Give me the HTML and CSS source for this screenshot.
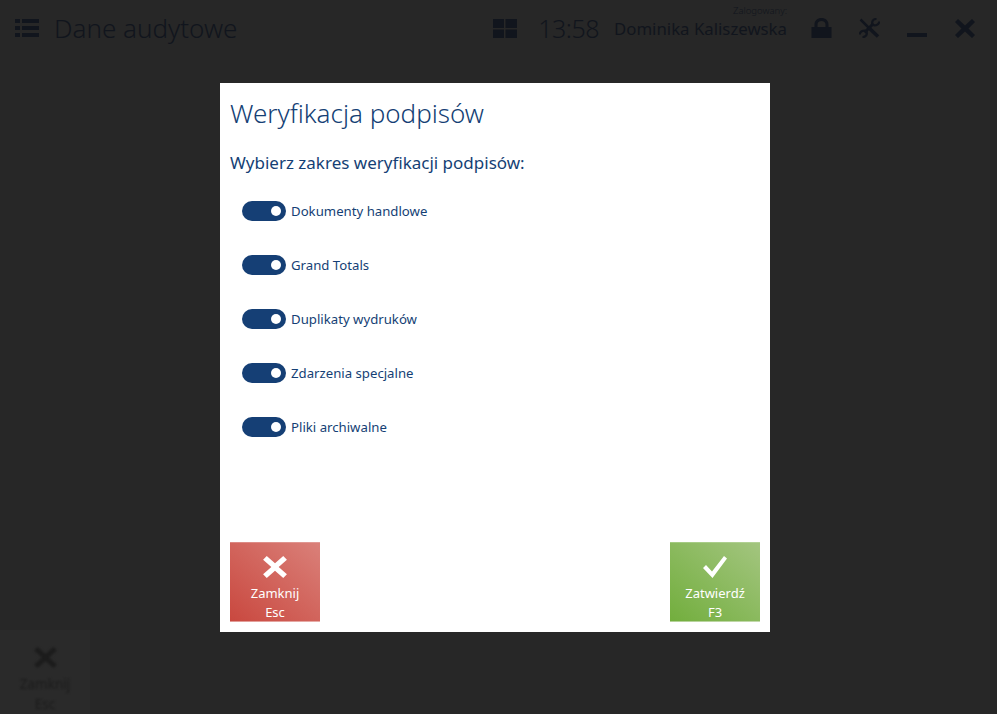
FILE: index.html
```html
<!DOCTYPE html>
<html lang="pl">
<head>
  <meta charset="UTF-8" />
  <title>Dane audytowe</title>
  <link rel="stylesheet" href="styles.css">
</head>
<body>
  <div class="page">
    <header class="topbar">
      <svg class="icon menu-icon" width="24" height="18" viewBox="0 0 24 18">
        <path d="M0 0h5v4H0zM7 0h17v4H7zM0 7h5v4H0zM7 7h17v4H7zM0 14h5v4H0zM7 14h17v4H7z"/>
      </svg>
      <div class="page-title">Dane audytowe</div>
      <svg class="icon tiles-icon" width="24" height="19" viewBox="0 0 24 19">
        <path d="M0 0h11v9H0zM12.500 0H24v9H12.500zM0 10.500h11V19H0zM12.500 10.500H24V19H12.500z"/>
      </svg>
      <div class="clock">13:58</div>
      <div class="user">
        <span class="user-label">Zalogowany:</span>
        <span class="user-name">Dominika Kaliszewska</span>
      </div>
      <svg class="icon lock-icon" width="21" height="20" viewBox="0 0 20 20">
        <path d="M0 9h3V6.500C3 2.500 6 0 10 0s7 2.500 7 6.500V9h3v11H0zM6 9h8V6.500C14 4.300 12.300 3 10 3S6 4.300 6 6.500z"/>
      </svg>
      <svg class="tools-icon" width="21" height="20" viewBox="0 0 21 20">
        <path d="M5.500 14.500l9-9" stroke-width="3"/>
        <path d="M17.500 1C14 .8 12.500 3.500 13.500 6.500 16 8.500 20 7 20.300 3.500" stroke-width="2.200"/>
        <path d="M3.500 19C7 19.200 8.500 16.500 7.500 13.500 5 11.500 1 13 .7 16.500" stroke-width="2.200"/>
        <path d="M1.500 1.500l8 8" stroke-width="2.500"/>
        <path d="M9.500 9.500l9.500 9" stroke-width="3.500"/>
      </svg>
      <svg class="icon min-icon" width="20" height="4" viewBox="0 0 20 4">
        <path d="M0 0h20v4H0z"/>
      </svg>
      <svg class="icon close-icon" width="20" height="19" viewBox="0 0 20 19">
        <path d="M0 3l3-3 7 6.500L17 0l3 3-6.500 6.500L20 16l-3 3-7-6.500L3 19l-3-3 6.500-6.500z"/>
      </svg>
    </header>

    <div class="tile-bar">
      <div class="tile-dim">
        <svg width="25" height="21" viewBox="0 0 26 24">
          <path d="M0 4l4-4 9 8 9-8 4 4-9 8 9 8-4 4-9-8-9 8-4-4 9-8z"/>
        </svg>
        <span>Zamknij</span>
        <span>Esc</span>
      </div>
    </div>
  </div>

  <div class="overlay">
    <div class="dialog">
      <h1 class="dialog-title">Weryfikacja podpisów</h1>
      <p class="dialog-lead">Wybierz zakres weryfikacji podpisów:</p>

      <ul class="toggles">
        <li class="toggle-row"><span class="toggle"></span>Dokumenty handlowe</li>
        <li class="toggle-row"><span class="toggle"></span>Grand Totals</li>
        <li class="toggle-row"><span class="toggle"></span>Duplikaty wydruków</li>
        <li class="toggle-row"><span class="toggle"></span>Zdarzenia specjalne</li>
        <li class="toggle-row"><span class="toggle"></span>Pliki archiwalne</li>
      </ul>

      <div class="dialog-actions">
        <div class="action action-cancel">
          <svg width="24" height="22" viewBox="0 0 26 24">
            <path d="M0 4l4-4 9 8 9-8 4 4-9 8 9 8-4 4-9-8-9 8-4-4 9-8z"/>
          </svg>
          <span>Zamknij</span>
          <span>Esc</span>
        </div>
        <div class="action action-ok">
          <svg width="24" height="22" viewBox="0 0 24 22">
            <path d="M0 12l3-3 6 6.500L21 0l3 2.500L9.500 22z"/>
          </svg>
          <span>Zatwierdź</span>
          <span>F3</span>
        </div>
      </div>
    </div>
  </div>
</body>
</html>
```

FILE: styles.css
```css
html, body {
  margin: 0;
  height: 100%;
  overflow: hidden;
}
body {
  font-family: "Noto Sans", "Open Sans", sans-serif;
  background: #272727;
  color: #11151d;
}
.page {
  height: 714px;
  display: flex;
  flex-direction: column;
  justify-content: space-between;
}
.topbar {
  display: flex;
  align-items: center;
  height: 56px;
  padding: 0 22px 0 15px;
}
.icon {
  fill: #11151d;
  flex: none;
}
.menu-icon {
  margin-right: 15px;
}
.page-title {
  font-size: 26px;
  font-weight: 300;
  flex: 1;
}
.tiles-icon {
  margin-right: 21px;
}
.clock {
  font-size: 25px;
  font-weight: 300;
  letter-spacing: -0.5px;
  margin-right: 15px;
}
.user {
  position: relative;
  font-size: 16.800px;
  margin-right: 24px;
}
.user-label {
  position: absolute;
  right: 0;
  top: -13px;
  font-size: 9.500px;
  font-weight: 300;
}
.lock-icon {
  margin-right: 27px;
}
.tools-icon {
  flex: none;
  fill: none;
  stroke: #11151d;
  margin-right: 27px;
}
.min-icon {
  margin: 14px 28px 0 0;
}
.tile-bar {
  height: 84px;
}
.tile-dim {
  width: 90px;
  height: 84px;
  background: #2a2a2a;
  display: flex;
  flex-direction: column;
  align-items: center;
  font-size: 13.500px;
  line-height: 20px;
  color: #1c1c1c;
}
.tile-dim svg {
  fill: #1c1c1c;
  margin: 17px 0 6px;
  filter: blur(1px);
}
.tile-dim span {
  filter: blur(1px);
}
.overlay {
  position: fixed;
  inset: 0;
  display: flex;
  align-items: flex-start;
  padding-left: 220px;
}
.dialog {
  width: 550px;
  height: 549px;
  margin-top: 83px;
  background: #fff;
  padding: 0 10px 10px;
  box-sizing: border-box;
  display: flex;
  flex-direction: column;
  color: #153f75;
}
.dialog-title {
  margin: 12px 0 0;
  font-size: 26px;
  font-weight: 300;
  line-height: 37px;
}
.dialog-lead {
  margin: 19px 0 0;
  font-size: 17px;
  line-height: 24px;
}
.toggles {
  list-style: none;
  margin: 9px 0 0;
  padding: 0 0 0 12px;
  flex: 1;
}
.toggle-row {
  display: flex;
  align-items: center;
  height: 54px;
  font-size: 13.200px;
}
.toggle {
  position: relative;
  width: 44px;
  height: 20px;
  border-radius: 10px;
  background: #153f75;
  margin-right: 5px;
}
.toggle::after {
  content: "";
  position: absolute;
  top: 5px;
  right: 5px;
  width: 10px;
  height: 10px;
  border-radius: 50%;
  background: #fff;
}
.dialog-actions {
  display: flex;
  justify-content: space-between;
}
.action {
  width: 90px;
  height: 80px;
  display: flex;
  flex-direction: column;
  align-items: center;
  font-size: 13px;
  line-height: 19px;
  color: #fff;
  box-sizing: border-box;
  border-top: 1px solid rgba(255, 255, 255, 0.35);
  border-bottom: 1px solid rgba(255, 255, 255, 0.35);
}
.action svg {
  flex: none;
  fill: #fff;
  margin: 13px 0 6px;
}
.action-cancel {
  background: linear-gradient(to top right, #c9483f, #da8079);
}
.action-ok {
  background: linear-gradient(to top right, #72ae3d, #a3c57f);
}
```
